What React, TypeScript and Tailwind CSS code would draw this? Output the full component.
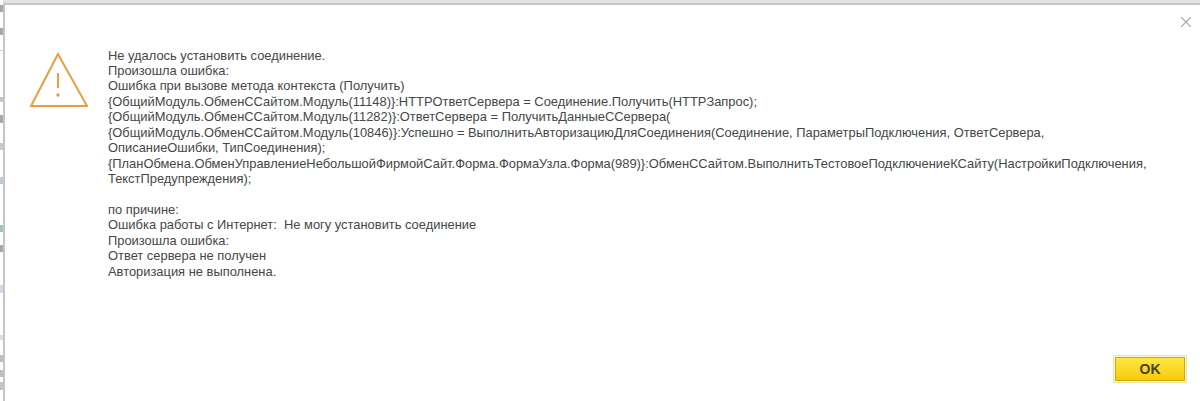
const fragments = [
  { top: 5, h: 7, color: "#a8a8a8" },
  { top: 16, h: 7, color: "#a8a8a8" },
  { top: 15, h: 1, color: "#d0d0d0" },
  { top: 46, h: 5, color: "#b4d0bc" },
  { top: 13, h: 8, color: "#a8a8a8" },
  { top: 20, h: 7, color: "#c8c8c8" },
  { top: 27, h: 7, color: "#bccbdc" },
  { top: 41, h: 7, color: "#9dc9b2" },
  { top: 13, h: 7, color: "#a8a8a8" },
  { top: 33, h: 8, color: "#d0dbea" },
  { top: 42, h: 5, color: "#dedede" },
  { top: 15, h: 7, color: "#c0c0c0" },
  { top: 8, h: 7, color: "#c0c0c0" },
  { top: 5, h: 8, color: "#c4c4c4" },
];

export default function App() {
  const lines = [
    "Не удалось установить соединение.",
    "Произошла ошибка:",
    "Ошибка при вызове метода контекста (Получить)",
    "{ОбщийМодуль.ОбменССайтом.Модуль(11148)}:HTTPОтветСервера = Соединение.Получить(HTTPЗапрос);",
    "{ОбщийМодуль.ОбменССайтом.Модуль(11282)}:ОтветСервера = ПолучитьДанныеССервера(",
    "{ОбщийМодуль.ОбменССайтом.Модуль(10846)}:Успешно = ВыполнитьАвторизациюДляСоединения(Соединение, ПараметрыПодключения, ОтветСервера,",
    "ОписаниеОшибки, ТипСоединения);",
    "{ПланОбмена.ОбменУправлениеНебольшойФирмойСайт.Форма.ФормаУзла.Форма(989)}:ОбменССайтом.ВыполнитьТестовоеПодключениеКСайту(НастройкиПодключения,",
    "ТекстПредупреждения);",
    "\u00a0",
    "по причине:",
    "Ошибка работы с Интернет:  Не могу установить соединение",
    "Произошла ошибка:",
    "Ответ сервера не получен",
    "Авторизация не выполнена.",
  ];
  return (
    <div className="flex h-[401px] w-[1200px] overflow-hidden bg-white font-['Liberation_Sans',Arial,sans-serif]">
      <div className="flex w-[3px] shrink-0 flex-col">
        {fragments.map((f, i) => (
          <div key={i} className="w-full shrink-0" style={{ marginTop: f.top, height: f.h, backgroundColor: f.color }} />
        ))}
      </div>
      <div className="flex min-w-0 flex-1 flex-col">
        <div className="h-[3px] shrink-0 bg-[#e2e2e2]" />
        <div className="flex min-h-0 flex-1 flex-col border-l-2 border-t-2 border-[#c6c6c6] bg-white">
          <div className="flex h-[30px] shrink-0 items-start justify-end pr-[9px] pt-[12px]">
            <svg width="10" height="10" viewBox="0 0 10 10" fill="none" stroke="#a0a0a0" strokeWidth="1.1">
              <path d="M0 0 L10 10 M10 0 L0 10" />
            </svg>
          </div>
          <div className="flex min-h-0 flex-1 pl-[23px] pr-[40px]">
            <div className="w-[80px] shrink-0 pt-[16px]">
              <svg width="60" height="56" viewBox="0 0 60 56" fill="none">
                <path d="M30 3 L3 55 H59 L30 3 Z" stroke="#e6a040" strokeWidth="2" strokeLinejoin="miter" />
                <path d="M30 22 V37" stroke="#e6a040" strokeWidth="2" />
                <circle cx="30" cy="44" r="1.7" fill="#dc9c4a" />
              </svg>
            </div>
            <div className="whitespace-pre pt-[12.5px] text-[12.9px] leading-[15.43px] text-[#464646]">
              {lines.map((l, i) => (
                <div key={i}>{l}</div>
              ))}
            </div>
          </div>
          <div className="flex h-[46px] shrink-0 items-start justify-end pr-[13px]">
            <div className="border border-[#e9e6a4] bg-[#fdfbe0] p-[1px]">
              <button className="flex h-[24px] w-[70px] items-center justify-center border border-[#cfa900] bg-gradient-to-b from-[#ffe63c] to-[#f6cb00] text-[14px] font-bold text-[#4a4210]">
                OK
              </button>
            </div>
          </div>
        </div>
      </div>
    </div>
  );
}
